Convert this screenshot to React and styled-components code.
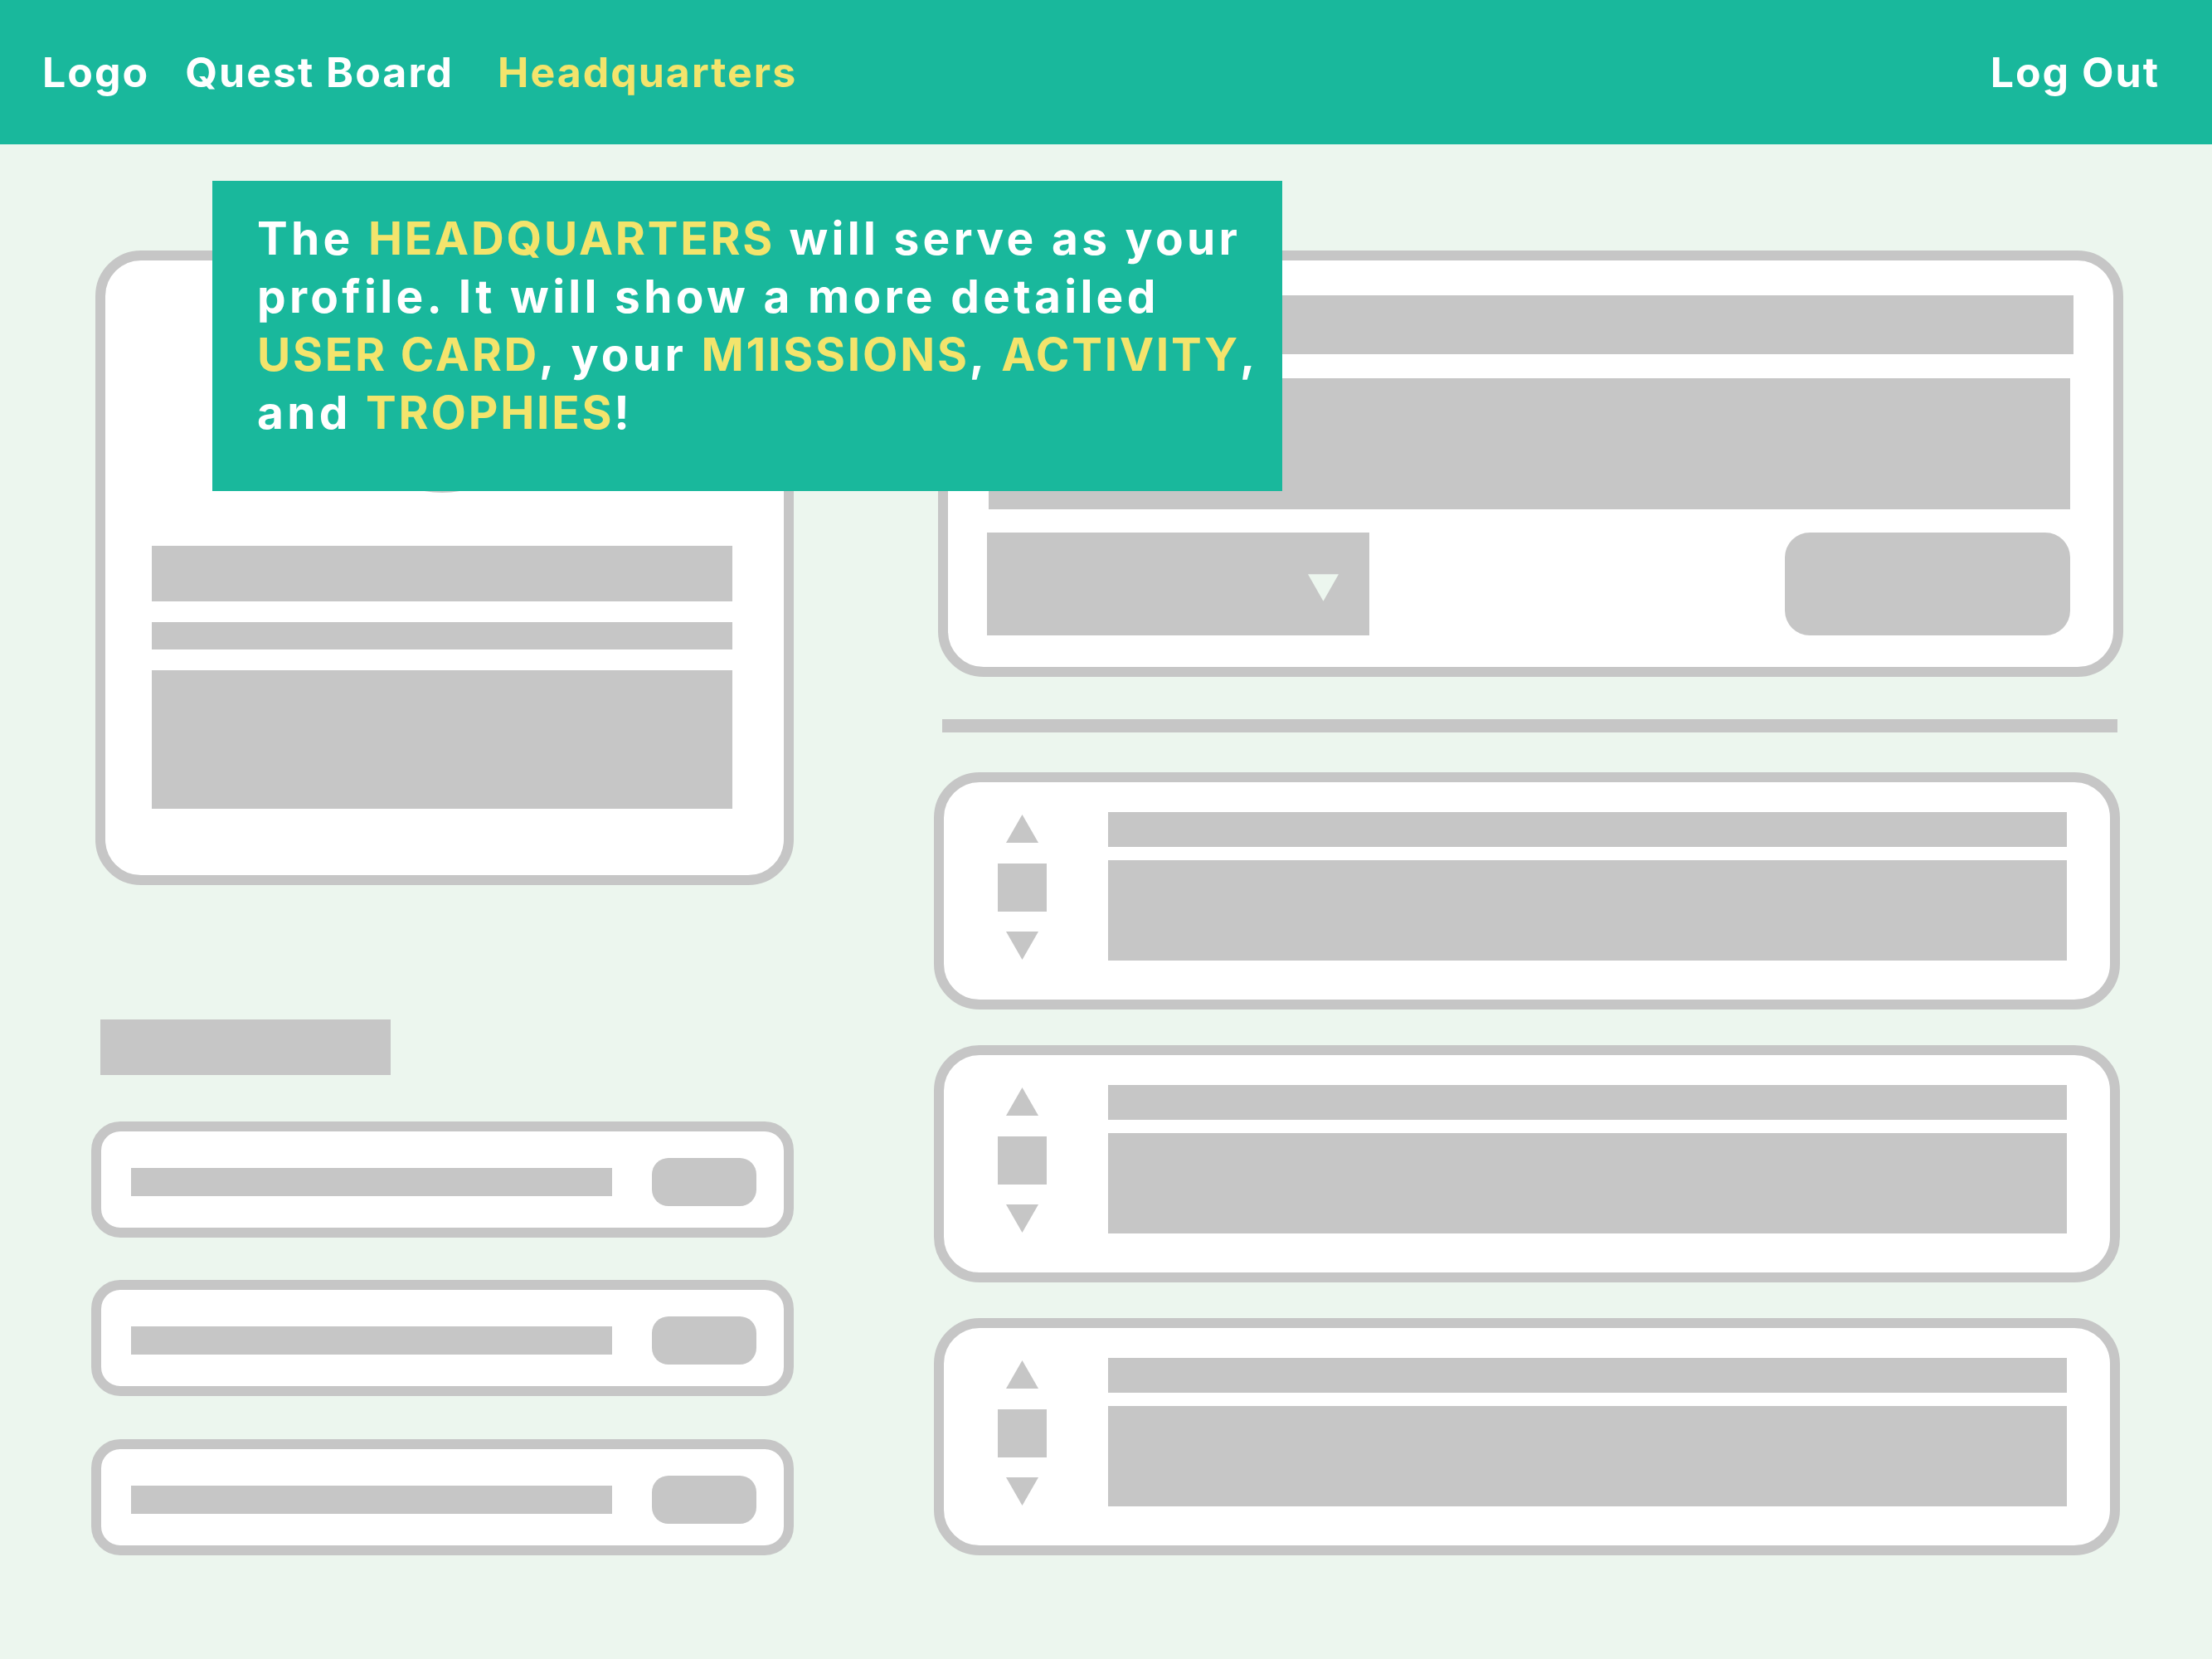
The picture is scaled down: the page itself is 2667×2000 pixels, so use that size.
import React from "react";
import styled, { createGlobalStyle } from "styled-components";

const GlobalStyle = createGlobalStyle`
  html, body {
    margin: 0;
    padding: 0;
    background-color: #ecf6ee;
  }

  body {
    font-family: Inter, "Open Sans", Arial, sans-serif;
  }
`;

const teal = "#19b89c";
const yellow = "#f3e46c";
const gray = "#c6c6c6";
const mint = "#ecf6ee";

const Page = styled.div`
  position: relative;
  min-height: 2000px;
  background-color: ${mint};
`;

const NavBar = styled.header`
  display: flex;
  align-items: center;
  height: 174px;
  padding: 0 63px 0 51px;
  background-color: ${teal};
  box-sizing: border-box;
`;

const NavLink = styled.a`
  font-size: 50px;
  font-weight: 700;
  letter-spacing: 2px;
  color: ${(p) => (p.$active ? yellow : "#fff")};
  margin-right: ${(p) => p.$gap || 0}px;
  margin-left: ${(p) => (p.$right ? "auto" : "0")};
  text-decoration: none;
  white-space: nowrap;
`;

const Callout = styled.div`
  position: absolute;
  left: 256px;
  top: 218px;
  width: 1290px;
  height: 374px;
  box-sizing: border-box;
  padding: 34px 0 0 54px;
  background-color: ${teal};
  color: #fff;
  font-size: 55px;
  font-weight: 700;
  letter-spacing: 4.3px;
  line-height: 70px;
  white-space: nowrap;
  z-index: 2;

  em {
    font-style: normal;
    letter-spacing: 2.8px;
    color: ${yellow};
  }
`;

const Main = styled.main`
  display: flex;
  gap: 169px;
  padding: 128px 110px 0 112px;
`;

const LeftColumn = styled.div`
  display: flex;
  flex-direction: column;
  width: 845px;
  flex-shrink: 0;
`;

const RightColumn = styled.div`
  display: flex;
  flex-direction: column;
  width: 1430px;
  flex-shrink: 0;
`;

const Card = styled.div`
  box-sizing: border-box;
  background-color: #fff;
  border: 12px solid ${gray};
  border-radius: ${(p) => p.$radius || 55}px;
`;

const UserCard = styled(Card)`
  display: flex;
  flex-direction: column;
  height: 765px;
  margin-left: 3px;
  padding: 60px 62px 80px 56px;
`;

const Avatar = styled.div`
  align-self: center;
  width: 220px;
  height: 220px;
  border-radius: 50%;
  background-color: ${gray};
  margin-bottom: 64px;
`;

const Block = styled.div`
  background-color: ${gray};
  height: ${(p) => p.$h}px;
  width: ${(p) => (p.$w ? `${p.$w}px` : "auto")};
  margin-top: ${(p) => p.$mt || 0}px;
  flex: ${(p) => (p.$grow ? "1" : "none")};
`;

const SectionTitle = styled(Block)`
  margin-left: 9px;
`;

const TrophyRow = styled(Card)`
  display: flex;
  align-items: center;
  height: 140px;
  padding: 6px 33px 0 36px;
  margin-top: ${(p) => p.$mt}px;
  margin-left: -2px;
`;

const Pill = styled.div`
  width: ${(p) => p.$w}px;
  height: ${(p) => p.$h}px;
  border-radius: ${(p) => p.$r}px;
  background-color: ${gray};
  flex-shrink: 0;
`;

const ComposeCard = styled(Card)`
  display: flex;
  flex-direction: column;
  height: 514px;
  margin-left: 5px;
  margin-right: -4px;
  padding: 42px 52px 38px 49px;
`;

const ComposeFooter = styled.div`
  display: flex;
  justify-content: space-between;
  align-items: center;
  margin-top: 28px;
`;

const Select = styled.div`
  display: flex;
  align-items: center;
  justify-content: flex-end;
  width: 461px;
  height: 124px;
  padding-right: 37px;
  padding-top: 8px;
  box-sizing: border-box;
  background-color: ${gray};
  margin-left: -2px;
`;

const Divider = styled.hr`
  height: 16px;
  margin: 51px 3px 48px 10px;
  border: none;
  background-color: ${gray};
`;

const ActivityCard = styled(Card)`
  display: flex;
  align-items: stretch;
  height: 286px;
  padding: 36px 52px 47px 65px;
  margin-top: ${(p) => p.$mt || 0}px;
`;

const Voter = styled.div`
  display: flex;
  flex-direction: column;
  align-items: center;
  justify-content: space-between;
  width: 59px;
  padding: 3px 0 1px;
  margin-right: 74px;
`;

const VoteBox = styled.div`
  width: 59px;
  height: 58px;
  background-color: ${gray};
`;

const ActivityBody = styled.div`
  display: flex;
  flex-direction: column;
  flex: 1;
  gap: 16px;
`;

function Triangle({ down, color = gray, w = 39, h = 34 }) {
  return (
    <svg width={w} height={h} viewBox="0 0 39 34" style={{ display: "block" }}>
      <polygon
        points={down ? "0,0 39,0 19.5,34" : "19.5,0 39,34 0,34"}
        fill={color}
      />
    </svg>
  );
}

function ActivityItem({ mt }) {
  return (
    <ActivityCard $mt={mt}>
      <Voter>
        <Triangle />
        <VoteBox />
        <Triangle down />
      </Voter>
      <ActivityBody>
        <Block $h={42} />
        <Block $grow />
      </ActivityBody>
    </ActivityCard>
  );
}

function Trophy({ mt }) {
  return (
    <TrophyRow $radius={35} $mt={mt}>
      <Block $w={580} $h={34} />
      <span style={{ flex: 1 }} />
      <Pill $w={126} $h={58} $r={20} />
    </TrophyRow>
  );
}

export default function App() {
  return (
    <>
      <GlobalStyle />
      <Page>
        <NavBar>
          <NavLink $gap={43}>Logo</NavLink>
          <NavLink $gap={53}>Quest Board</NavLink>
          <NavLink $active>Headquarters</NavLink>
          <NavLink $right>Log Out</NavLink>
        </NavBar>

        <Callout>
          The <em>HEADQUARTERS</em> will serve as your
          <br />
          profile. It will show a more detailed
          <br />
          <em>USER CARD</em>, your <em>M1ISSIONS</em>, <em>ACTIVITY</em>,
          <br />
          and <em>TROPHIES</em>!
        </Callout>

        <Main>
          <LeftColumn>
            <UserCard>
              <Avatar />
              <Block $h={67} />
              <Block $h={33} $mt={25} />
              <Block $h={167} $mt={25} />
            </UserCard>

            <SectionTitle $w={350} $h={67} $mt={162} />

            <Trophy mt={56} />
            <Trophy mt={51} />
            <Trophy mt={52} />
          </LeftColumn>

          <RightColumn>
            <ComposeCard>
              <Block $h={71} style={{ marginRight: -4 }} />
              <Block $h={158} $mt={29} />
              <ComposeFooter>
                <Select>
                  <Triangle down color={mint} w={37} h={35} />
                </Select>
                <Pill $w={344} $h={124} $r={30} />
              </ComposeFooter>
            </ComposeCard>

            <Divider />

            <ActivityItem />
            <ActivityItem mt={43} />
            <ActivityItem mt={43} />
          </RightColumn>
        </Main>
      </Page>
    </>
  );
}
